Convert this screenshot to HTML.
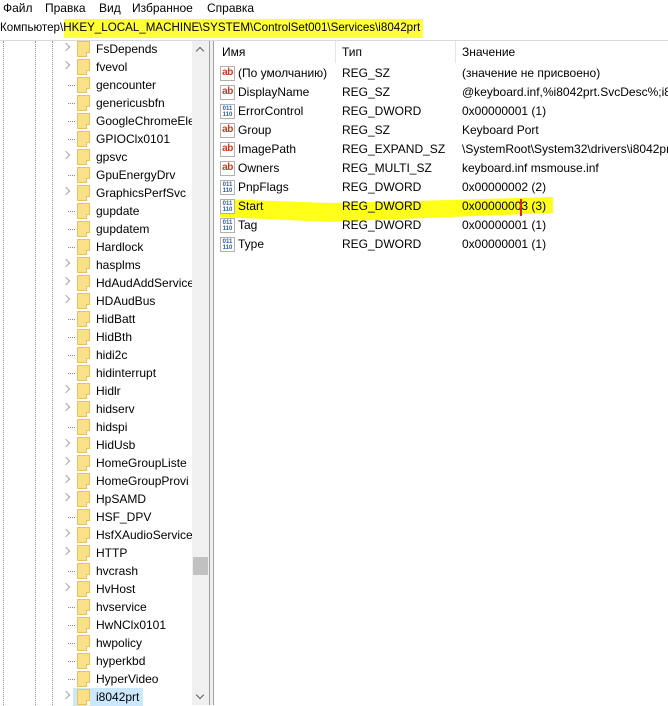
<!DOCTYPE html>
<html><head><meta charset="utf-8"><style>
*{margin:0;padding:0;box-sizing:border-box}
body{width:668px;height:705px;overflow:hidden;background:#fff;font-family:"Liberation Sans","DejaVu Sans",sans-serif;font-size:12px;color:#000;position:relative}
.abs{position:absolute;white-space:nowrap}
.menu span{position:absolute;top:1px}
.tree .row{position:absolute;left:0;height:18px;width:192px}
.tree .row .t{position:absolute;left:96px;top:2px;font-size:12px}
.fold{position:absolute;left:77px;top:1px;width:13px;height:16px;background:#fbe08a;border:1px solid #e9c25a}
.fold:after{content:"";position:absolute;right:-1px;bottom:-1px;width:3px;height:4px;background:#fff;border-left:1px solid #e9c25a;border-top:1px solid #e9c25a}
.chev{position:absolute;left:63px;top:4px;width:6px;height:6px;border-right:1.5px solid #a6a6a6;border-top:1.5px solid #a6a6a6;transform:rotate(45deg)}
.dots{position:absolute;left:68px;top:9px;width:7px;border-top:1px dotted #888}
.lr{position:absolute;left:220px;height:19px;width:448px}
.lr span{position:absolute;top:2px}
.ic{position:absolute;left:0;top:2px;width:15px;height:15px;border:1px solid #b0b0b0;background:#fff}
.ab{color:#d03a1a;font-weight:bold;font-size:10px;line-height:12px;text-align:center;letter-spacing:-0.5px}
.bin{font-size:6px;line-height:6px;color:#2b5ea8;font-weight:bold;text-align:center;padding-top:1px}
</style></head><body>
<div class="menu abs" style="left:0;top:0;width:668px;height:18px">
<span style="left:3px">Файл</span><span style="left:45px">Правка</span><span style="left:99px">Вид</span><span style="left:132px">Избранное</span><span style="left:207px">Справка</span>
</div>
<div class="abs" style="left:64px;top:19px;width:359px;height:19px;background:#ffff3a"></div>
<div class="abs" style="left:0;top:21px;font-size:11.6px">Компьютер\HKEY_LOCAL_MACHINE\SYSTEM\ControlSet001\Services\i8042prt</div>
<div class="abs" style="left:0;top:40px;width:668px;height:1px;background:#d9d9d9"></div>
<div class="abs" style="left:3px;top:41px;height:664px;border-left:1px dotted #999"></div>
<div class="abs" style="left:35px;top:41px;height:664px;border-left:1px dotted #999"></div>
<div class="abs" style="left:52px;top:41px;height:664px;border-left:1px dotted #999"></div>
<div class="tree" id="tree"></div>
<div class="abs" style="left:192px;top:41px;width:17px;height:664px;background:#f0f0f0"></div>
<div class="abs" style="left:197px;top:48px;width:6px;height:6px;border-left:1.5px solid #606060;border-top:1.5px solid #606060;transform:rotate(45deg)"></div>
<div class="abs" style="left:197px;top:692px;width:6px;height:6px;border-right:1.5px solid #606060;border-bottom:1.5px solid #606060;transform:rotate(45deg)"></div>
<div class="abs" style="left:193px;top:557px;width:15px;height:18px;background:#c1c1c1"></div>
<div class="abs" style="left:209px;top:41px;width:1px;height:664px;background:#a0a0a0"></div>
<div class="abs" style="left:210px;top:41px;width:3px;height:664px;background:#f0f0f0"></div>
<div class="abs" style="left:213px;top:41px;width:1px;height:664px;background:#a0a0a0"></div>
<div class="abs" style="left:222px;top:45px">Имя</div>
<div class="abs" style="left:335px;top:41px;width:1px;height:22px;background:#e5e5e5"></div>
<div class="abs" style="left:342px;top:45px">Тип</div>
<div class="abs" style="left:455px;top:41px;width:1px;height:22px;background:#e5e5e5"></div>
<div class="abs" style="left:462px;top:45px">Значение</div>
<svg class="abs" style="left:0;top:0" width="668" height="705"><polygon points="220,199 330,203 450,200 553,197 553,213 450,217 330,222 220,217" fill="#ffff1a"/></svg>
<div id="list"></div>
<div class="abs" style="left:520px;top:199px;width:2px;height:17px;background:#e02020"></div>
<script>
var items=[["FsDepends",1],["fvevol",1],["gencounter",0],["genericusbfn",0],["GoogleChromeEle",0],["GPIOClx0101",0],["gpsvc",1],["GpuEnergyDrv",0],["GraphicsPerfSvc",1],["gupdate",0],["gupdatem",0],["Hardlock",0],["hasplms",1],["HdAudAddService",1],["HDAudBus",1],["HidBatt",0],["HidBth",0],["hidi2c",0],["hidinterrupt",0],["Hidlr",1],["hidserv",1],["hidspi",0],["HidUsb",1],["HomeGroupListe",1],["HomeGroupProvi",1],["HpSAMD",1],["HSF_DPV",0],["HsfXAudioService",1],["HTTP",1],["hvcrash",0],["HvHost",1],["hvservice",0],["HwNClx0101",0],["hwpolicy",0],["hyperkbd",0],["HyperVideo",0],["i8042prt",1]];
var h="";items.forEach(function(it,i){var y=40+i*18;var sel=i==36;
h+='<div class="row" style="top:'+y+'px">'+(sel?'<div style="position:absolute;left:73px;top:0;width:70px;height:18px;background:#cce8ff"></div>':'')+(it[1]?'<div class="chev"></div>':'<div class="dots"></div>')+'<div class="fold"></div><div class="t">'+it[0]+'</div></div>';});
document.getElementById("tree").innerHTML=h;
var rows=[["ab","(По умолчанию)","REG_SZ","(значение не присвоено)"],["ab","DisplayName","REG_SZ","@keyboard.inf,%i8042prt.SvcDesc%;i8042"],["b","ErrorControl","REG_DWORD","0x00000001 (1)"],["ab","Group","REG_SZ","Keyboard Port"],["ab","ImagePath","REG_EXPAND_SZ","\\SystemRoot\\System32\\drivers\\i8042prt.sys"],["ab","Owners","REG_MULTI_SZ","keyboard.inf msmouse.inf"],["b","PnpFlags","REG_DWORD","0x00000002 (2)"],["b","Start","REG_DWORD","0x00000003 (3)"],["b","Tag","REG_DWORD","0x00000001 (1)"],["b","Type","REG_DWORD","0x00000001 (1)"]];
var g="";rows.forEach(function(r,i){var y=64+i*19;
g+='<div class="lr" style="top:'+y+'px">'+(r[0]=="ab"?'<div class="ic ab">ab</div>':'<div class="ic bin">011<br>110</div>')+'<span style="left:18px">'+r[1]+'</span><span style="left:122px">'+r[2]+'</span><span style="left:242px">'+r[3]+'</span></div>';});
document.getElementById("list").innerHTML=g;
</script>
</body></html>
